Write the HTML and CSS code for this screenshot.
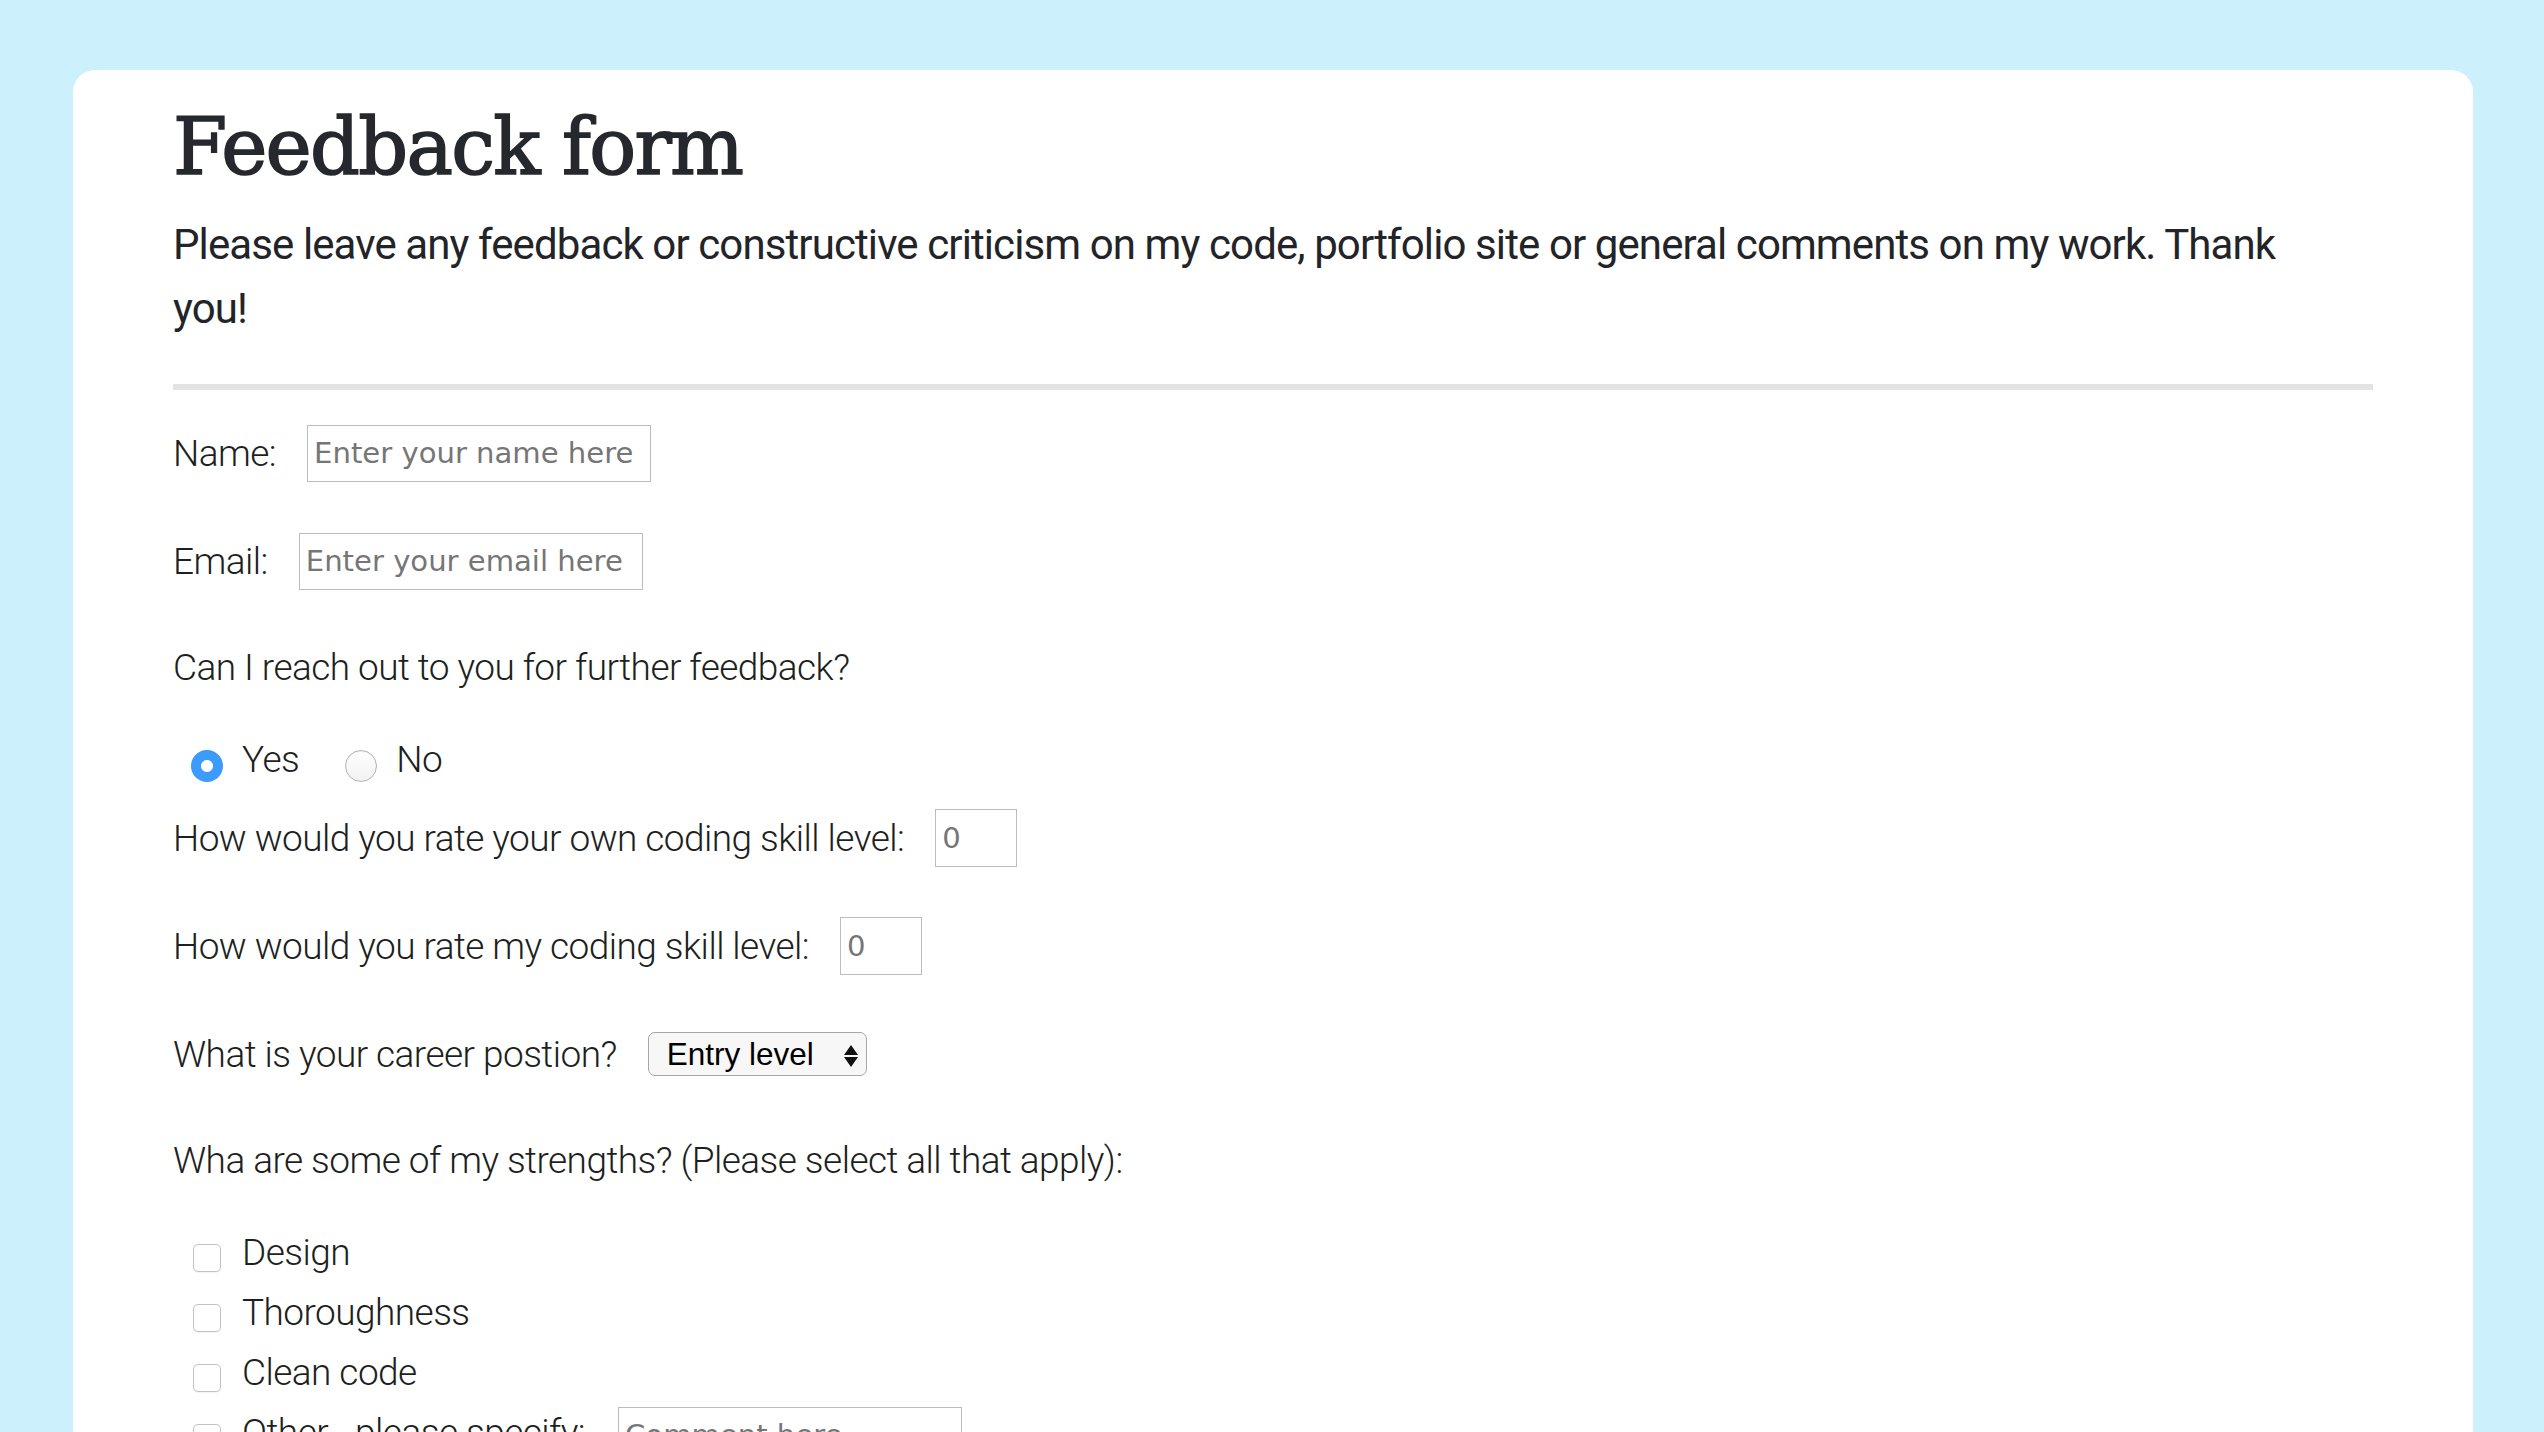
FILE: index.html
```html
<!DOCTYPE html>
<html lang="en">
<head>
<meta charset="utf-8">
<title>Feedback form</title>
<link rel="stylesheet" href="styles.css">
</head>
<body>
<main class="card">
  <h1 class="title">Feedback form</h1>
  <p class="intro">Please leave any feedback or constructive criticism on my code, portfolio site or general comments on my work. Thank you!</p>
  <hr class="divider">
  <form class="form">
    <div class="field">
      <label class="label" for="name">Name:</label>
      <input class="text-input" id="name" type="text" placeholder="Enter your name here">
    </div>
    <div class="field field-email">
      <label class="label" for="email">Email:</label>
      <input class="text-input" id="email" type="email" placeholder="Enter your email here">
    </div>
    <div class="field field-question">
      <span class="label">Can I reach out to you for further feedback?</span>
    </div>
    <div class="field field-radios">
      <label class="option"><input class="radio" type="radio" name="reach" value="yes" checked><span>Yes</span></label>
      <label class="option"><input class="radio" type="radio" name="reach" value="no"><span>No</span></label>
    </div>
    <div class="field">
      <label class="label" for="own">How would you rate your own coding skill level:</label>
      <input class="num-input" id="own" type="number" placeholder="0">
    </div>
    <div class="field">
      <label class="label" for="mine">How would you rate my coding skill level:</label>
      <input class="num-input" id="mine" type="number" placeholder="0">
    </div>
    <div class="field field-career">
      <label class="label" for="career">What is your career postion?</label>
      <div class="select-wrap">
        <select class="select" id="career">
          <option>Entry level</option>
          <option>Junior</option>
          <option>Mid level</option>
          <option>Senior</option>
        </select>
        <svg class="select-arrows" width="14" height="22" viewBox="0 0 14 22" aria-hidden="true"><polygon points="7,0 14,10 0,10" fill="#111"/><polygon points="0,12 14,12 7,22" fill="#111"/></svg>
      </div>
    </div>
    <div class="field field-strengths">
      <span class="label">Wha are some of my strengths? (Please select all that apply):</span>
    </div>
    <div class="check-row"><label class="option check-option"><input class="checkbox" type="checkbox"><span>Design</span></label></div>
    <div class="check-row"><label class="option check-option"><input class="checkbox" type="checkbox"><span>Thoroughness</span></label></div>
    <div class="check-row"><label class="option check-option"><input class="checkbox" type="checkbox"><span>Clean code</span></label></div>
    <div class="check-row">
      <label class="option check-option"><input class="checkbox" type="checkbox"><span>Other - please specify:</span></label>
      <input class="text-input comment-input" type="text" placeholder="Comment here">
    </div>
    <div class="field field-question">
      <label class="label" for="comments">Any other comments?</label>
    </div>
    <textarea class="textarea" id="comments" placeholder="Enter your comments here"></textarea>
    <div class="actions"><button class="submit" type="submit">Submit</button></div>
  </form>
</main>
</body>
</html>
```
FILE: styles.css
```css
* { box-sizing: border-box; }

html, body {
  margin: 0;
  background: #ccf0fc;
}

body {
  padding: 70px 71px 0 73px;
  color: #212326;
}

.card {
  background: #ffffff;
  border-radius: 22px;
  padding: 37px 100px 120px;
  min-height: 1600px;
}

.title {
  margin: 0;
  font-family: "DejaVu Serif", serif;
  font-weight: 400;
  font-size: 78px;
  line-height: 80px;
  letter-spacing: -1.7px;
  -webkit-text-stroke: 1.6px #25282c;
  color: #25282c;
}

.intro {
  margin: 26px 0 0;
  max-width: 2150px;
  font-family: Roboto, "Liberation Sans", sans-serif;
  font-weight: 400;
  font-size: 42px;
  line-height: 64px;
  letter-spacing: -0.9px;
  color: #222428;
}

.divider {
  margin: 43px 0 34px;
  border: 0;
  height: 6px;
  background: #e3e3e3;
}

.form {
  display: flex;
  flex-direction: column;
  align-items: flex-start;
  font-family: Roboto, "Liberation Sans", sans-serif;
  font-weight: 300;
  font-size: 37px;
  letter-spacing: -0.55px;
  color: #1e1f21;
}

.field {
  display: flex;
  align-items: center;
  gap: 31px;
  height: 58px;
  margin-bottom: 50px;
}

.field-email { margin-bottom: 48px; }
.field-question { margin-bottom: 34px; }
.field-radios { margin-bottom: 21px; gap: 46px; padding-left: 18px; }
.field-career { margin-bottom: 48px; }
.field-strengths { margin-bottom: 34px; }

.label { white-space: nowrap; }

.text-input,
.num-input {
  height: 57px;
  border: 1px solid #bcbcbc;
  border-radius: 0;
  padding: 0 6px;
  font-family: "DejaVu Sans", sans-serif;
  font-size: 29.1px;
  font-weight: 400;
  letter-spacing: 0;
  color: #333;
  background: #fff;
  outline: none;
}

.text-input { width: 344px; }
.num-input { width: 82px; height: 58px; -moz-appearance: textfield; }
.num-input::-webkit-inner-spin-button,
.num-input::-webkit-outer-spin-button { -webkit-appearance: none; margin: 0; }

.text-input::placeholder,
.num-input::placeholder { color: #767676; opacity: 1; }

.option {
  display: inline-flex;
  align-items: center;
  gap: 19px;
  white-space: nowrap;
}

.radio {
  -webkit-appearance: none;
  appearance: none;
  margin: 14px 0 0;
  width: 32px;
  height: 32px;
  border-radius: 50%;
  border: 1px solid #b3b3b3;
  background: linear-gradient(#ffffff, #f2f2f2);
  box-shadow: inset 0 1px 1px rgba(0,0,0,0.06);
}

.radio:checked {
  border: 0;
  background: radial-gradient(circle, #ffffff 0 5.5px, #3d9bfd 6.5px);
}

.check-row {
  display: flex;
  align-items: center;
  gap: 33px;
  height: 58px;
  margin-bottom: 2px;
}

.check-option { padding-left: 20px; gap: 21px; }

.checkbox {
  -webkit-appearance: none;
  appearance: none;
  margin: 12px 0 0;
  width: 28px;
  height: 28px;
  border: 1px solid #c2c2c2;
  border-radius: 5px;
  background: #fff;
  box-shadow: 0 0.5px 1px rgba(0,0,0,0.05);
}

.comment-input { margin-top: 6px; }

.select-wrap {
  position: relative;
  display: inline-flex;
}

.select {
  -webkit-appearance: none;
  appearance: none;
  width: 219px;
  height: 44px;
  margin: 0;
  padding: 0 40px 0 18px;
  border: 1.5px solid #a6a6a6;
  border-radius: 7px;
  background: #f7f7f7;
  font-family: "Liberation Sans", Arial, sans-serif;
  font-size: 31.5px;
  font-weight: 400;
  letter-spacing: 0;
  color: #000;
}

.select-arrows {
  position: absolute;
  right: 9px;
  top: 13px;
  pointer-events: none;
}

.textarea {
  width: 900px;
  height: 200px;
  border: 1px solid #bcbcbc;
  padding: 8px;
  font-family: "DejaVu Sans", sans-serif;
  font-size: 28px;
  margin-bottom: 40px;
}

.submit {
  font-family: Roboto, sans-serif;
  font-size: 32px;
  padding: 10px 30px;
}
```
